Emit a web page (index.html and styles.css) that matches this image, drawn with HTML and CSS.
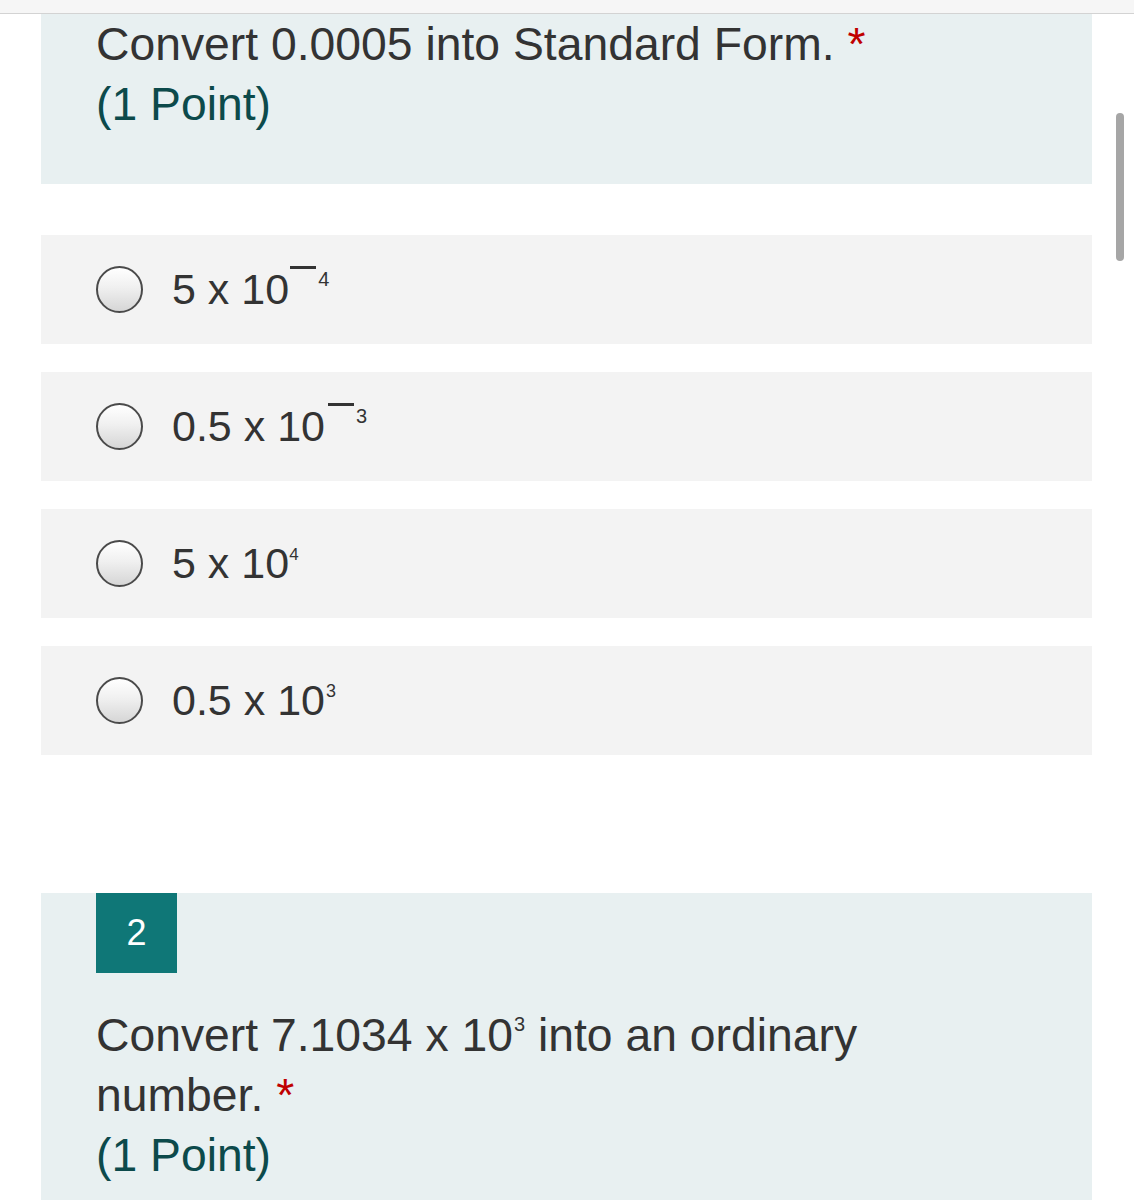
FILE: index.html
```html
<!DOCTYPE html>
<html lang="en">
<head>
<meta charset="utf-8">
<title>Quiz</title>
<link rel="stylesheet" href="styles.css">
</head>
<body>
<div class="topbar"></div>
<main class="page">
  <section class="question q1">
    <div class="q-title">Convert 0.0005 into Standard Form. <span class="req">*</span></div>
    <div class="q-points">(1 Point)</div>
  </section>

  <div class="options">
    <label class="option"><span class="radio"></span><span class="opt-text">5 x 10<span class="bar"></span><span class="sup s1">4</span></span></label>
    <label class="option"><span class="radio"></span><span class="opt-text">0.5 x 10<span class="bar b2"></span><span class="sup s1">3</span></span></label>
    <label class="option"><span class="radio"></span><span class="opt-text">5 x 10<span class="sup s2">4</span></span></label>
    <label class="option"><span class="radio"></span><span class="opt-text">0.5 x 10<span class="sup s3">3</span></span></label>
  </div>

  <section class="question q2">
    <div class="badge">2</div>
    <div class="q-title wide">Convert 7.1034 x 10<span class="sup s4">3</span> into an ordinary number. <span class="req">*</span></div>
    <div class="q-points">(1 Point)</div>
  </section>
</main>
<div class="scrollbar"></div>
</body>
</html>
```

FILE: styles.css
```css
html, body {
  margin: 0;
  padding: 0;
  background: #ffffff;
  height: 1200px;
  overflow: hidden;
}

body {
  font-family: "Liberation Sans", Arial, sans-serif;
  color: #333333;
}

.topbar {
  height: 13px;
  background: #f6f6f6;
  border-bottom: 1px solid #d3d3d3;
}

.page {
  width: 1051px;
  margin-left: 41px;
}

.question {
  background: #e8f0f1;
  padding: 0 55px 50px 55px;
}

.q-title {
  font-size: 46.3px;
  line-height: 60px;
  color: #333333;
}

.q-title.wide {
  max-width: 900px;
}

.q-points {
  font-size: 46.3px;
  line-height: 60px;
  color: #0c4a4b;
}

.req {
  color: #c00000;
}

.options {
  margin-top: 51px;
  display: flex;
  flex-direction: column;
  gap: 28px;
}

.option {
  height: 109px;
  background: #f3f3f3;
  display: flex;
  align-items: center;
  padding-left: 55px;
  gap: 29px;
}

.radio {
  width: 43px;
  height: 43px;
  border: 2.5px solid #4a4a4a;
  border-radius: 50%;
  background: linear-gradient(180deg, #ffffff 0%, #f0f0f0 45%, #d6d6d6 100%);
  flex: none;
}

.opt-text {
  font-size: 43px;
  color: #333333;
  white-space: nowrap;
}

.bar {
  display: inline-block;
  width: 26px;
  height: 3px;
  background: #333333;
  vertical-align: 35px;
  margin-left: 1px;
}

.b2 {
  margin-left: 3px;
}

.sup {
  position: relative;
  line-height: 0;
}

.s1 {
  font-size: 20px;
  top: -18px;
  margin-left: 2px;
}

.s2 {
  font-size: 17px;
  top: -18px;
}

.s3 {
  font-size: 18px;
  top: -18px;
  margin-left: 1px;
}

.s4 {
  font-size: 20px;
  top: -20px;
  margin-left: 1px;
}

.q2 {
  margin-top: 138px;
  padding: 0 55px 20px 55px;
}

.badge {
  width: 81px;
  height: 80px;
  background: #0f7777;
  color: #ffffff;
  font-size: 36px;
  display: flex;
  align-items: center;
  justify-content: center;
  margin-bottom: 32px;
}

.scrollbar {
  position: absolute;
  left: 1116px;
  top: 113px;
  width: 8px;
  height: 148px;
  border-radius: 4px;
  background: #a6a6a6;
}
```
